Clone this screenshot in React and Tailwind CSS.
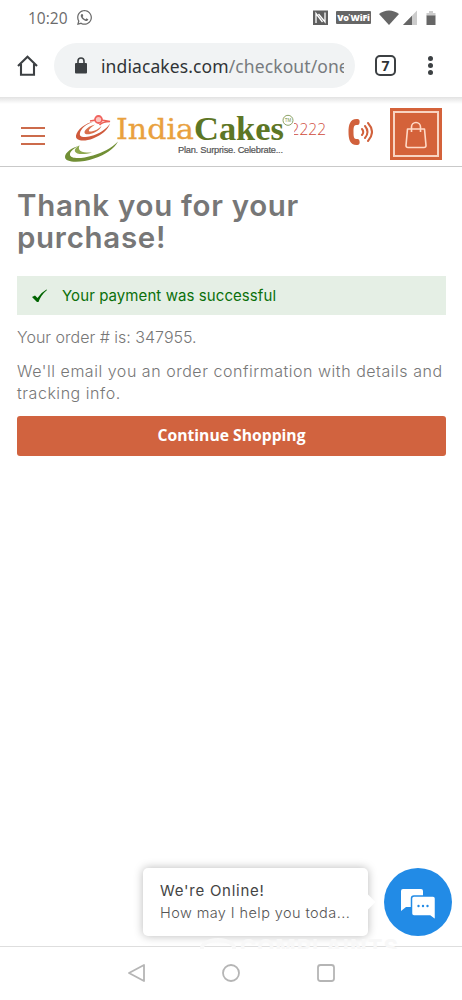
import { FaWhatsapp } from "react-icons/fa";

// Phone status bar
function StatusBar() {
  return (
    <div className="flex h-[35px] items-center pl-7 pr-[26px] font-['Open_Sans',sans-serif] text-[#6b6b6b]">
      <span className="text-[15.5px] leading-5">10:20</span>
      <FaWhatsapp className="ml-2 size-[17px]" />
      <div className="ml-auto flex h-5 items-center">
        <svg className="h-4 w-[15px]" viewBox="0 0 15 16">
          <rect y=".5" width="15" height="14.500" fill="#5f5f5f" />
          <path d="M3 13V3.500L9.500 12M12 2.500V12L5.500 4" fill="none" stroke="#fff" strokeWidth="1.300" />
        </svg>
        <span className="ml-2 flex h-[13px] w-[35px] items-center justify-center rounded-[1px] bg-[#666] text-[9px] font-extrabold leading-none tracking-[-0.2px] text-white">
          Vo<span className="-ml-px">&#8125;</span>WiFi
        </span>
        <svg className="ml-2 h-4 w-5" viewBox="0 0 20 16">
          <path d="M0 4C6-.7 14-.7 20 4L10 15Z" fill="#666" />
        </svg>
        <svg className="ml-1 h-4 w-[14px]" viewBox="0 0 14 16">
          <path d="M0 15L14 .5V15Z" fill="#ccc" />
          <path d="M0 15L9 5.700V15Z" fill="#666" />
        </svg>
        <svg className="ml-[9px] h-4 w-[10px]" viewBox="0 0 10 16">
          <path d="M3 1h4v2h2.500v3h-9V3H3Z" fill="#ccc" />
          <path d="M.5 5.500h9V15h-9Z" fill="#666" />
        </svg>
      </div>
    </div>
  );
}

// Browser toolbar with address field
function Toolbar() {
  return (
    <div className="flex h-[62px] items-start pl-[17px] pt-2">
      <svg className="mt-3 h-[21px] w-[21px]" viewBox="0 0 21 21" fill="none" stroke="#3c4043" strokeWidth="2.1">
        <path d="M1 11 10.500 1.700 20 11M4 9v10.800h13V9" />
      </svg>
      <div className="ml-4 flex h-[45px] w-[301px] items-center rounded-full bg-[#f1f3f4] pl-[21px] pr-[11px]">
        <svg className="h-[17px] w-3 shrink-0" viewBox="0 0 12 17">
          <rect y="6" width="12" height="10.500" rx="1" fill="#3c4043" />
          <path d="M3 7V4a3 3 0 0 1 6 0v3" fill="none" stroke="#3c4043" strokeWidth="1.600" />
        </svg>
        <div className="ml-[14px] flex-1 overflow-hidden whitespace-nowrap font-['Noto_Sans',sans-serif] text-[17.500px] leading-6 tracking-[0.1px] text-[#777b7e]">
          <span className="text-[#303336]">indiacakes.com</span>/checkout/one
        </div>
      </div>
      <div className="ml-5 mt-3 flex size-[21px] items-center justify-center rounded-[5px] border-2 border-[#3c4043] font-['Open_Sans',sans-serif] text-[14px] font-bold leading-none text-[#303336]">
        7
      </div>
      <div className="ml-[32px] mt-[13px] flex flex-col gap-[2.500px]">
        <i className="size-[4.500px] rounded-full bg-[#3c4043]" />
        <i className="size-[4.500px] rounded-full bg-[#3c4043]" />
        <i className="size-[4.500px] rounded-full bg-[#3c4043]" />
      </div>
    </div>
  );
}

function Logo() {
  return (
    <svg className="ml-[18px] h-[58px] w-[232px]" viewBox="62 107 232 58">
      <path d="M93 121.500C84 123 76 130 75 135.500c-1 5.500 8 6.500 17 3 9-3.500 15-9 17-15-4 6-11 10.500-19 12.500-8 2-12 1-11-3 1-4.500 6-9 14-11.500Z" fill="#cf5a3c" />
      <path d="M94 124.500c-6 1.500-10 5-10.500 7.500-.5 3 5 3 10 .5 4-2 6-4 7-6.500-3 3-6.500 5-10 5.500-3.500.5-3-1.500-1-3.500 1.300-1.300 3-2.500 4.500-3.500Z" fill="#d9704c" />
      <path d="M89 121c6-1.500 13-1.500 20 .5-5 0-8 1-10.500 3.500" fill="none" stroke="#ec6055" strokeWidth="1.500" />
      <circle cx="97.500" cy="119.500" r="3.500" fill="#fcc6c2" stroke="#f0645f" strokeWidth="1.800" />
      <path d="M79 145.500c-8 2-15 7-15 11.500 0 6 16 6 29 1.500 12-4 20-9.500 24-17-7 7-15 11-25 14-12 3.500-22 3.500-23-.5-.7-3 4-7 10-9.500Z" fill="#718f35" />
      <path d="M78.500 145.500c-2.500 5.500 3 7.500 12.500 7-8 2.500-16 2-17-1-.7-2.300 1.500-4.500 4.500-6Z" fill="#8da84e" />
      <text x="115" y="139" fontFamily="DejaVu Serif" fontSize="27" textLength="78" lengthAdjust="spacingAndGlyphs" fill="#e9a13e" stroke="#e9a13e" strokeWidth=".3">India</text>
      <text x="193" y="139.500" fontFamily="Liberation Serif" fontWeight="700" fontSize="34" textLength="90" lengthAdjust="spacingAndGlyphs" fill="#5d7625">Cakes</text>
      <text x="177" y="152.500" fontFamily="Liberation Sans" fontSize="9.300" textLength="105" fill="#555" stroke="#555" strokeWidth=".2">Plan. Surprise. Celebrate...</text>
      <circle cx="287" cy="120.300" r="5" fill="#fff" stroke="#8da265" />
      <text x="287" y="122" textAnchor="middle" fontFamily="Liberation Sans" fontSize="4.500" fill="#73903c">TM</text>
    </svg>
  );
}

function Header() {
  return (
    <header className="flex h-[70px] items-center border-b border-[#c9c9c9] bg-linear-to-b from-[#e2e2e2] from-0% to-white to-10% pl-[21px]">
      <div className="mt-2 flex w-6 flex-col gap-[6px]">
        <i className="h-[2px] bg-[#cc6b4b]" />
        <i className="h-[2px] bg-[#cc6b4b]" />
        <i className="h-[2px] bg-[#cc6b4b]" />
      </div>
      <div className="mt-2">
        <Logo />
      </div>
      <div className="-ml-[1px] -mt-[5px] flex w-[32px] justify-end overflow-hidden whitespace-nowrap font-['Open_Sans',sans-serif] text-[15.500px] font-light leading-5 text-[#cf4a3a]">
        2222
      </div>
      <svg className="ml-[22px] h-7 w-[25px]" viewBox="0 0 25 28">
        <path d="M8.500 1C2 1 .5 7 .5 14S2 27 8.500 27c3 0 3.500-1.500 3-4-.3-2-1.500-2-3.500-2-2-.2-2.500-2-2.500-7S6 7.200 8 7c2 0 3.200 0 3.500-2 .5-2.500 0-4-3-4Z" fill="#d1613c" />
        <path d="M14 11q2.500 3 0 6M17 8q5 6 0 12M20 5q8 9 0 18" fill="none" stroke="#d1613c" strokeWidth="2" strokeLinecap="round" />
      </svg>
      <div className="ml-[17px] mt-[5px] flex size-[52px] items-center justify-center bg-[#d4623a]">
        <div className="flex size-[46px] items-center justify-center border-2 border-[#f8d3c2] pt-[2px]">
          <svg className="h-[28px] w-[22px]" viewBox="0 0 22 28" fill="none" stroke="#ffd9c6" strokeWidth="1.600" strokeLinejoin="round">
            <path d="M2.500 8h17L21 24.500c0 1.500-.5 2-2 2H3c-1.500 0-2-.5-2-2ZM6.500 11V6a4.500 4.500 0 0 1 9 0v5" />
          </svg>
        </div>
      </div>
    </header>
  );
}

function ChatWidget() {
  return (
    <div className="flex items-center pl-[143px]">
      <div className="relative h-[68px] w-[225px] rounded-[5px] bg-white px-[17px] pt-3 font-[Inter,sans-serif] shadow-[0_0_10px_rgba(0,0,0,0.28)]">
        <p className="whitespace-nowrap text-[15px] leading-[22px] tracking-[0.75px] text-[#444]">We're Online!</p>
        <p className="whitespace-nowrap text-[14.500px] font-light leading-[22px] tracking-[0.42px] text-[#555]">How may I help you toda...</p>
        <i className="absolute -right-[5px] top-[28px] size-3 rotate-45 bg-white" />
      </div>
      <div className="ml-4 flex size-[68px] items-center justify-center rounded-full bg-[#228be6]">
        <svg className="mt-1 h-[32px] w-9" viewBox="0 0 36 32">
          <path d="M3 1h18a2 2 0 0 1 2 2v16H6l-5 4V3a2 2 0 0 1 2-2Z" fill="#fff" />
          <path d="M14 8h19a2.500 2.500 0 0 1 2.500 2.500V32L30 28H14a2.500 2.500 0 0 1-2.500-2.500v-15A2.500 2.500 0 0 1 14 8Z" fill="#fff" stroke="#228be6" strokeWidth="1.500" />
          <circle cx="18.500" cy="18" r="1.200" fill="#228be6" />
          <circle cx="23" cy="18" r="1.200" fill="#228be6" />
          <circle cx="27.500" cy="18" r="1.200" fill="#228be6" />
        </svg>
      </div>
    </div>
  );
}

// Android navigation buttons
function NavBar() {
  return (
    <nav className="relative flex h-[54px] items-center border-t border-[#dedede] pb-[2px] pl-32">
      <div className="absolute -top-[11px] left-[200px] flex h-[13px] w-[220px] items-start gap-1 overflow-hidden">
        <i className="mt-[2px] h-5 w-9 shrink-0 rounded-[50%] border-4 border-[#f8f8f8]" />
        <span className="font-[Inter,sans-serif] text-[22px] font-bold leading-[22px] tracking-[1px] text-[#f8f8f8]">COMPLAINTS</span>
      </div>
      <svg className="h-5 w-[210px]" viewBox="0 0 210 20" fill="none" stroke="#b5b5b5" strokeWidth="1.800" strokeLinejoin="round">
        <path d="M16 2v16L1 10Z" />
        <circle cx="103" cy="10" r="8" />
        <rect x="190" y="2" width="16" height="16" rx="2.500" />
      </svg>
    </nav>
  );
}

export default function App() {
  return (
    <div className="flex h-[1000px] w-[462px] flex-col overflow-hidden bg-white">
      <StatusBar />
      <Toolbar />
      <Header />
      <main className="flex-1 px-4 pl-[17px] pt-[22px] font-[Inter,sans-serif] text-[16px] text-[#777]">
        <h1 className="text-[29.500px] font-semibold leading-8 tracking-[0.7px] text-[#777]">
          Thank you for your
          <br />
          purchase!
        </h1>
        <div className="mt-[23px] flex h-[39px] items-center bg-[#e5efe5] pl-[14px] text-[15px] text-[#0b700b]">
          <svg className="mr-[14px] h-[14px] w-[17px]" viewBox="0 0 17 14">
            <path d="M1 8 4 6.500 6.500 9Q10 3.500 15.500.5L16 1Q10 6 7.500 13H6Z" fill="#006400" />
          </svg>
          <span className="mt-px whitespace-nowrap tracking-[0.08px]">Your payment was successful</span>
        </div>
        <p className="mt-[11px] font-light leading-[22px]">Your order # is: 347955.</p>
        <p className="mt-3 whitespace-nowrap font-light leading-[22px] tracking-[0.53px]">
          We'll email you an order confirmation with details and
          <br />
          tracking info.
        </p>
        <button className="mt-3 h-10 w-full rounded-[3px] bg-[#d1633f] font-['Open_Sans',sans-serif] text-[15.700px] font-bold text-white">
          Continue Shopping
        </button>
      </main>
      <div className="mb-[10px]">
        <ChatWidget />
      </div>
      <NavBar />
    </div>
  );
}
